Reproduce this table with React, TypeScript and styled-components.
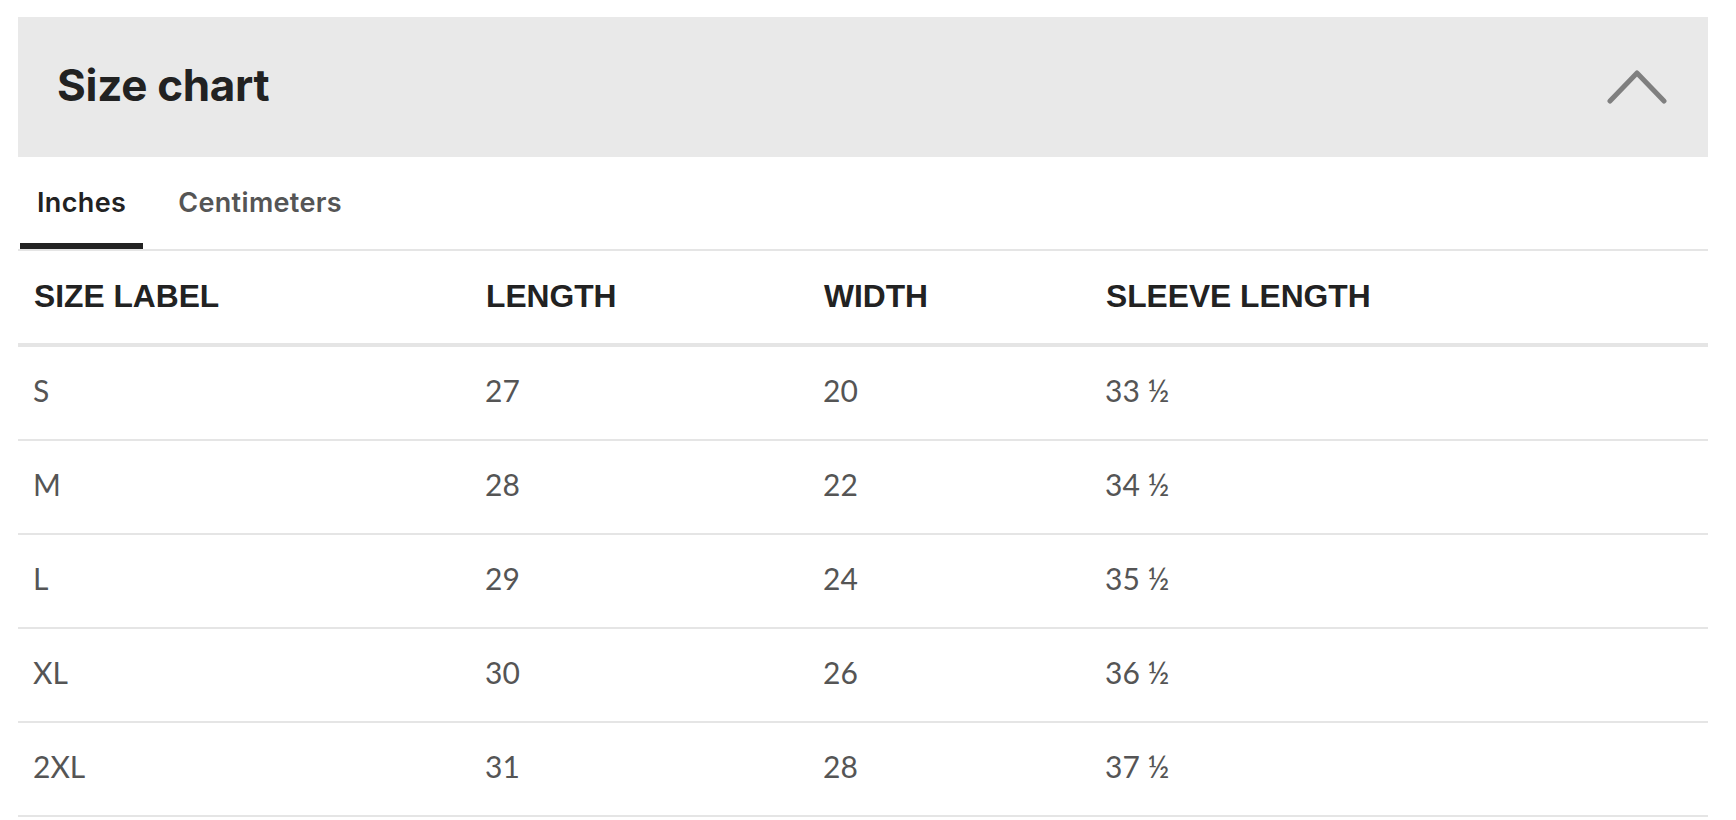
import React, { useState } from "react";
import styled, { createGlobalStyle } from "styled-components";

const GlobalStyle = createGlobalStyle`
  html, body {
    margin: 0;
    padding: 0;
    background: #ffffff;
  }
  * { box-sizing: border-box; }
`;

const Page = styled.div`
  width: 1690px;
  margin: 17px 0 0 18px;
`;

const AccordionHeader = styled.button`
  display: flex;
  align-items: center;
  justify-content: space-between;
  width: 100%;
  height: 140px;
  padding: 0 41px 0 39px;
  margin: 0;
  border: none;
  background: #e9e9e9;
  cursor: pointer;
  text-align: left;
`;

const Title = styled.h2`
  margin: 0 0 3px 0;
  font-family: "Inter", "Lato", sans-serif;
  font-weight: 700;
  font-size: 44px;
  line-height: 45px;
  color: #222222;
  letter-spacing: -0.3px;
`;

const Chevron = styled.svg`
  display: block;
  width: 60px;
  height: 36px;
  margin-bottom: 3px;
`;

const TabBar = styled.div`
  display: flex;
  gap: 18px;
  padding-left: 2px;
  border-bottom: 2px solid #e5e5e5;
`;

const Tab = styled.button<{ $active?: boolean }>`
  margin: 0;
  padding: 29px 17px 23px 17px;
  border: none;
  border-bottom: 6px solid ${(p) => (p.$active ? "#222222" : "transparent")};
  background: transparent;
  font-family: "Inter", "Lato", sans-serif;
  font-weight: 600;
  font-size: 27px;
  line-height: 34px;
  letter-spacing: 0.35px;
  color: ${(p) => (p.$active ? "#222222" : "#555555")};
  cursor: pointer;
`;

const Row = styled.div<{ $head?: boolean }>`
  display: grid;
  grid-template-columns: 452px 338px 282px 1fr;
  border-bottom: ${(p) => (p.$head ? "4px" : "2px")} solid #e5e5e5;
  padding: ${(p) => (p.$head ? "27px 0 29px 0" : "25px 0 31px 0")};
`;

const HeadCell = styled.div`
  padding-left: 16px;
  font-family: "Liberation Sans", Arial, sans-serif;
  font-weight: 700;
  font-size: 31.75px;
  line-height: 36px;
  color: #222222;
  text-transform: uppercase;
`;

const Cell = styled.div`
  padding-left: 15px;
  font-family: "Lato", "Noto Sans", sans-serif;
  font-weight: 400;
  font-size: 30px;
  line-height: 36px;
  color: #555555;
`;

const columns = ["Size label", "Length", "Width", "Sleeve length"];

const rows = [
  ["S", "27", "20", "33 ½"],
  ["M", "28", "22", "34 ½"],
  ["L", "29", "24", "35 ½"],
  ["XL", "30", "26", "36 ½"],
  ["2XL", "31", "28", "37 ½"],
];

export default function App() {
  const [unit, setUnit] = useState<"in" | "cm">("in");
  return (
    <>
      <GlobalStyle />
      <Page>
        <AccordionHeader type="button" aria-expanded="true">
          <Title>Size chart</Title>
          <Chevron viewBox="0 0 60 36" aria-hidden="true">
            <polyline
              points="3,33 30,5 57,33"
              fill="none"
              stroke="#7f7f7f"
              strokeWidth="5"
              strokeLinecap="round"
              strokeLinejoin="round"
            />
          </Chevron>
        </AccordionHeader>
        <TabBar role="tablist">
          <Tab $active={unit === "in"} onClick={() => setUnit("in")}>
            Inches
          </Tab>
          <Tab $active={unit === "cm"} onClick={() => setUnit("cm")}>
            Centimeters
          </Tab>
        </TabBar>
        <div role="table">
          <Row $head role="row">
            {columns.map((c) => (
              <HeadCell key={c} role="columnheader">
                {c}
              </HeadCell>
            ))}
          </Row>
          {rows.map((r) => (
            <Row key={r[0]} role="row">
              {r.map((v, i) => (
                <Cell key={i} role="cell">
                  {v}
                </Cell>
              ))}
            </Row>
          ))}
        </div>
      </Page>
    </>
  );
}
